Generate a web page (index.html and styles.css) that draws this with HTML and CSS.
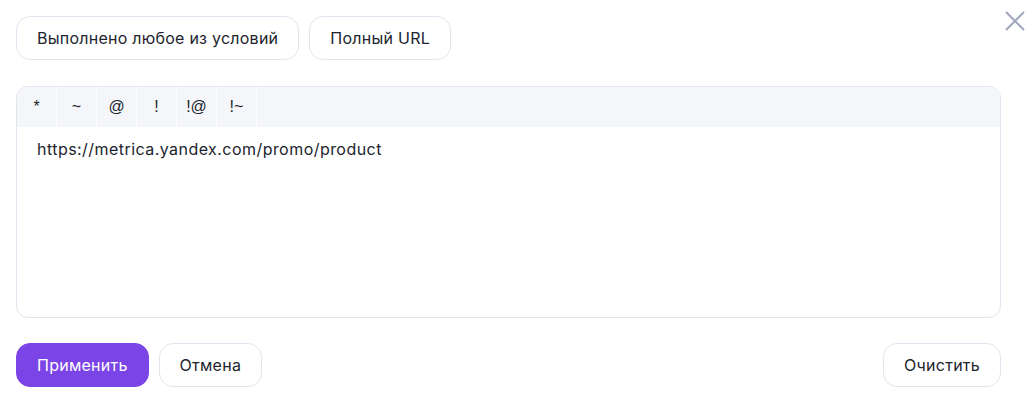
FILE: index.html
```html
<!DOCTYPE html>
<html lang="ru">
  <head>
    <meta charset="UTF-8" />
    <meta name="viewport" content="width=device-width, initial-scale=1.0" />
    <title>Фильтр URL</title>
    <link rel="stylesheet" href="styles.css">
  </head>
  <body>
    <div class="panel">
      <button class="close" aria-label="Закрыть">
        <svg width="22" height="22" viewBox="0 0 22 22">
          <path d="M2 2L20 20M20 2L2 20" stroke="#a0a8bd" stroke-width="2" fill="none" />
        </svg>
      </button>

      <div class="top-row">
        <button class="btn">Выполнено любое из условий</button>
        <button class="btn">Полный URL</button>
      </div>

      <div class="editor">
        <div class="toolbar">
          <span class="op">*</span>
          <span class="op">~</span>
          <span class="op">@</span>
          <span class="op">!</span>
          <span class="op">!@</span>
          <span class="op">!~</span>
        </div>
        <div class="editor-text">https://metrica.yandex.com/promo/product</div>
      </div>

      <div class="bottom-row">
        <button class="btn btn-primary">Применить</button>
        <button class="btn">Отмена</button>
        <button class="btn btn-right">Очистить</button>
      </div>
    </div>
  </body>
</html>
```

FILE: styles.css
```css
body {
  margin: 0;
  font-family: Inter, "Noto Sans", Arial, sans-serif;
  color: #21242d;
  background: #fff;
}
.panel {
  position: relative;
  padding: 16px;
}
.close {
  position: absolute;
  top: 10px;
  right: 6px;
  padding: 0;
  border: none;
  background: none;
  cursor: pointer;
}
.top-row,
.bottom-row {
  display: flex;
  gap: 10px;
  width: 985px;
}
.btn {
  height: 44px;
  padding: 0 20px;
  font-family: inherit;
  font-size: 16px;
  letter-spacing: 0.25px;
  color: #21242d;
  background: #fff;
  border: 1px solid #e2e4ef;
  border-radius: 14px;
  cursor: pointer;
}
.btn-primary {
  color: #fff;
  background: #7b44e6;
  border-color: #7b44e6;
}
.btn-right {
  margin-left: auto;
}
.editor {
  width: 983px;
  height: 230px;
  margin: 26px 0 25px;
  border: 1px solid #e2e4ef;
  border-radius: 12px;
  overflow: hidden;
}
.toolbar {
  display: flex;
  height: 40px;
  background: #f5f6fa;
}
.op {
  display: flex;
  align-items: center;
  justify-content: center;
  width: 39px;
  border-right: 1px solid #fff;
  font-family: Arial, "Liberation Sans", sans-serif;
  font-size: 16px;
}
.editor-text {
  padding: 10px 20px;
  font-size: 16px;
  line-height: 24px;
  letter-spacing: 0.45px;
}
```
